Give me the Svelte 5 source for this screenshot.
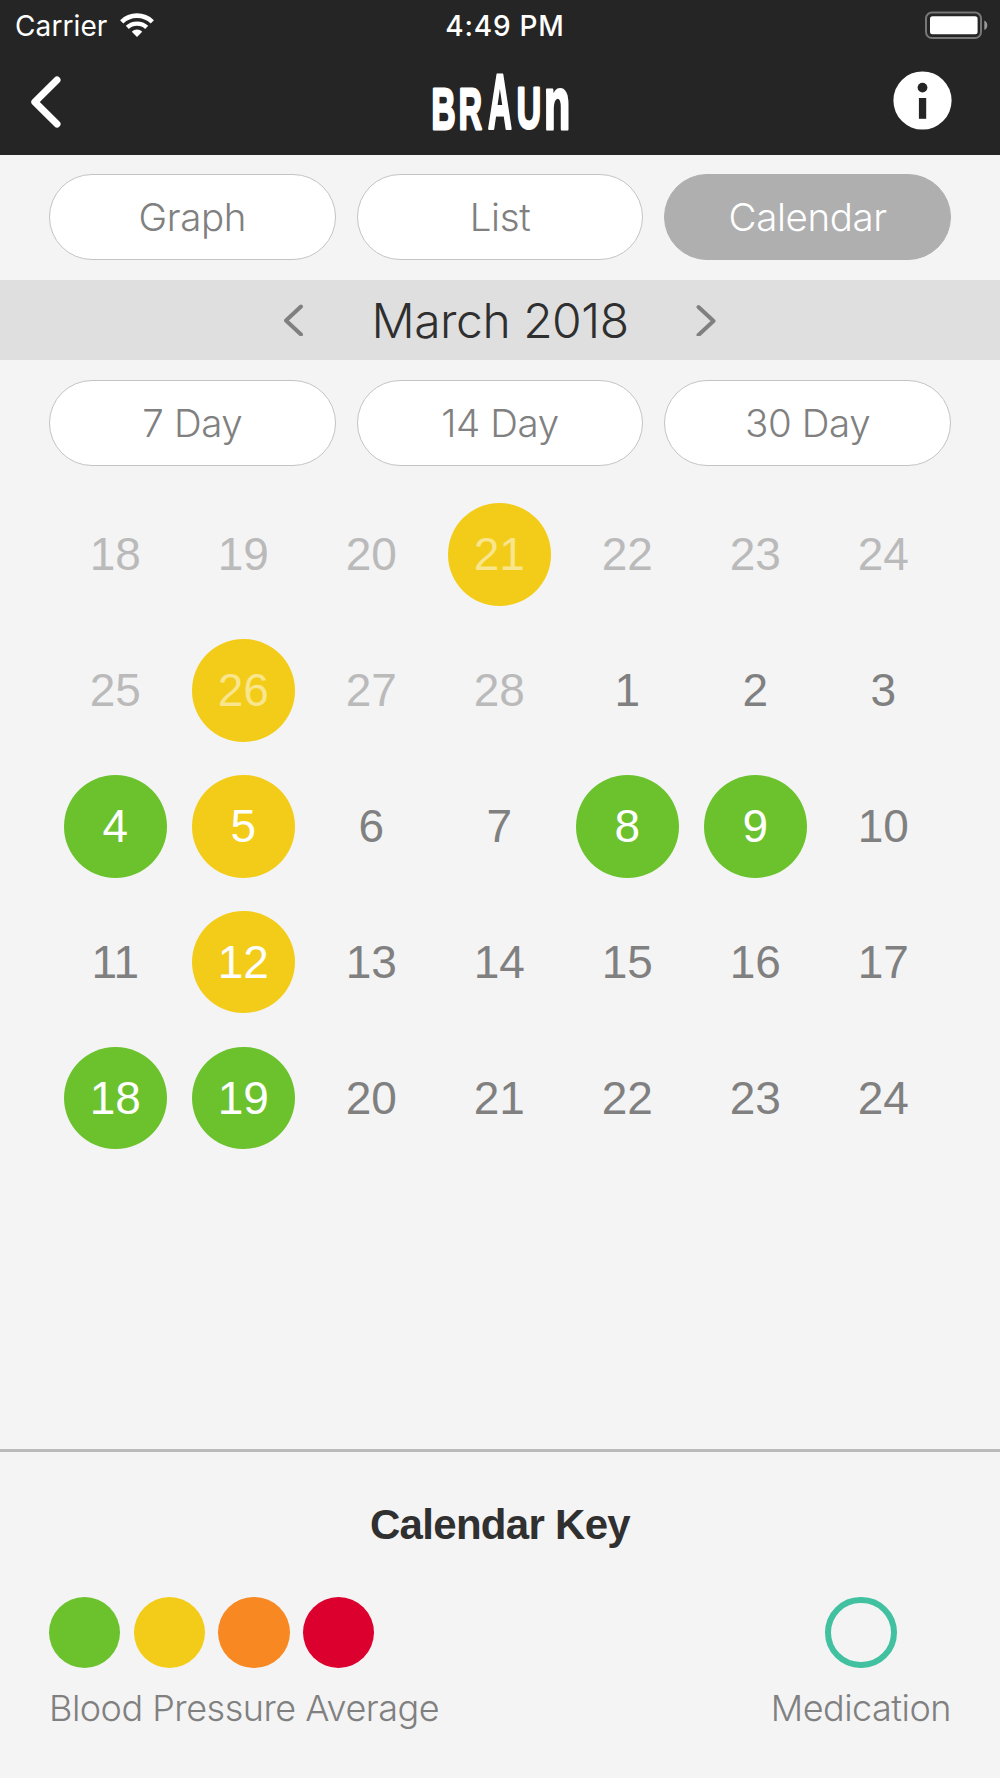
<script lang="ts">
  type Level = 'normal' | 'elevated' | 'high' | 'severe';

  interface Day {
    date: number;
    outside?: boolean;
    level?: Level;
  }

  const views = ['Graph', 'List', 'Calendar'];
  const ranges = ['7 Day', '14 Day', '30 Day'];
  const levels: Level[] = ['normal', 'elevated', 'high', 'severe'];

  const previous: Record<number, Level> = { 21: 'elevated', 26: 'elevated' };
  const current: Record<number, Level> = {
    4: 'normal',
    5: 'elevated',
    8: 'normal',
    9: 'normal',
    12: 'elevated',
    18: 'normal',
    19: 'normal'
  };

  let view = $state('Calendar');

  const days: Day[] = [];
  for (let date = 18; date <= 28; date++) {
    days.push({ date, outside: true, level: previous[date] });
  }
  for (let date = 1; date <= 24; date++) {
    days.push({ date, level: current[date] });
  }
</script>

<div class="screen">
  <header class="header">
    <div class="status">
      <div class="status__carrier">
        <span>Carrier</span>
        <svg width="34" height="26" viewBox="0 0 34 26" fill="none" stroke="#fff" aria-hidden="true">
          <path d="M1.7 8.8C10.2 .6 23.8 .6 32.3 8.8" stroke-width="4.6" />
          <path d="M7.3 14.4C12.7 9.3 21.3 9.3 26.7 14.4" stroke-width="4.4" />
          <path d="M11.8 18.7C14.7 15.9 19.3 15.9 22.2 18.7L17 24.1Z" fill="#fff" stroke="none" />
        </svg>
      </div>
      <span class="status__time">4:49 PM</span>
      <svg class="status__battery" width="65" height="30" viewBox="0 0 65 30" aria-hidden="true">
        <rect x="2" y="1.5" width="55" height="25.6" rx="6" fill="none" stroke="#777" stroke-width="2" />
        <rect x="6" y="5.3" width="47.6" height="18" rx="2.5" fill="#fff" />
        <path d="M60.3 9.5C64.3 11 64.3 17.6 60.3 19.1Z" fill="#999" />
      </svg>
    </div>
    <nav class="nav">
      <button class="icon-button" aria-label="Back">
        <svg width="34" height="58" viewBox="0 0 34 58" fill="none">
          <path
            d="M27 8L4.8 30L27 52"
            stroke="#fff"
            stroke-width="7"
            stroke-linecap="round"
            stroke-linejoin="round"
          />
        </svg>
      </button>
      <svg class="logo" width="140" height="100" viewBox="0 -20 140 100">
        <text transform="translate(1.6 57.7) scale(.573 1)" font-size="58">B</text>
        <text transform="translate(28.7 57.7) scale(.553 1)" font-size="58">R</text>
        <text transform="translate(58 57.7) scale(.42 1)" font-size="78.5">A</text>
        <text transform="translate(86.8 57.3) scale(.58 1)" font-size="58">U</text>
        <text transform="translate(113.9 57.7) scale(.58 1)" font-size="74">n</text>
      </svg>
      <button class="icon-button" aria-label="Information">
        <svg width="60" height="60" viewBox="0 0 60 60">
          <circle cx="29.5" cy="29.5" r="29.1" fill="#fff" />
          <circle cx="29.5" cy="16.6" r="4.9" fill="#252525" />
          <rect x="25.9" y="27" width="7.3" height="20.8" fill="#252525" />
        </svg>
      </button>
    </nav>
  </header>

  <div class="tabs">
    {#each views as name}
      <button class="pill" class:pill--active={view === name} onclick={() => (view = name)}>
        {name}
      </button>
    {/each}
  </div>

  <div class="month">
    <button class="icon-button" aria-label="Previous month">
      <svg width="20" height="32" viewBox="0 0 20 32" fill="none">
        <path d="M17 2.5L2 16.5L17 30.5" />
      </svg>
    </button>
    <h1 class="month__name">March 2018</h1>
    <button class="icon-button" aria-label="Next month">
      <svg width="20" height="32" viewBox="0 0 20 32" fill="none">
        <path d="M2.5 3L17.5 17L2.5 31" />
      </svg>
    </button>
  </div>

  <div class="tabs">
    {#each ranges as range}
      <button class="pill">{range}</button>
    {/each}
  </div>

  <main class="calendar">
    {#each days as day}
      <div class="calendar__cell">
        <span class="day {day.level ?? ''}" class:day--marked={day.level} class:day--outside={day.outside}>
          {day.date}
        </span>
      </div>
    {/each}
  </main>

  <footer class="key">
    <h2 class="key__title">Calendar Key</h2>
    <div class="key__row">
      <div class="key__item">
        <div class="key__dots">
          {#each levels as level}
            <span class="dot {level}"></span>
          {/each}
        </div>
        <span class="key__label">Blood Pressure Average</span>
      </div>
      <div class="key__item key__item--center">
        <span class="dot dot--ring"></span>
        <span class="key__label">Medication</span>
      </div>
    </div>
  </footer>
</div>

<style>
  :global(body) {
    margin: 0;
  }

  .screen {
    display: flex;
    flex-direction: column;
    width: 1000px;
    height: 1778px;
    overflow: hidden;
    background: #f4f4f4;
    font-family: Inter, 'Liberation Sans', sans-serif;
    color: #808080;
  }

  button {
    padding: 0;
    border: 0;
    background: none;
    font: inherit;
    color: inherit;
    cursor: pointer;
  }

  svg {
    display: block;
  }

  .header {
    height: 154.5px;
    flex: none;
    background: #252525;
    color: #fff;
  }

  .status {
    display: grid;
    grid-template-columns: 1fr auto 1fr;
    align-items: center;
    height: 51px;
    padding: 0 11px 0 15px;
    font-size: 28px;
  }

  .status__carrier {
    display: flex;
    align-items: center;
    gap: 13px;
    letter-spacing: 0.1px;
  }

  .status__time {
    padding-left: 6px;
    font-weight: 500;
    letter-spacing: 0.8px;
  }

  .status__battery {
    justify-self: end;
  }

  .nav {
    display: grid;
    grid-template-columns: 1fr auto 1fr;
    align-items: center;
    height: 100px;
    padding: 0 47px 0 30px;
  }

  .nav .icon-button:last-child {
    justify-self: end;
  }

  .logo {
    margin-left: 17px;
    overflow: visible;
    font-family: 'Liberation Sans', sans-serif;
    font-weight: 700;
    fill: #fff;
    stroke: #fff;
    stroke-width: 3px;
    stroke-linejoin: round;
  }

  .tabs {
    display: grid;
    grid-template-columns: repeat(3, 1fr);
    gap: 21px;
    padding: 19.5px 49px 20px;
  }

  .pill {
    height: 86px;
    border: 1px solid #c4c4c4;
    border-radius: 43px;
    background: #fff;
    font-size: 38.5px;
    font-weight: 300;
    letter-spacing: -0.4px;
  }

  .pill--active {
    border-color: #afafaf;
    background: #afafaf;
    color: #fff;
  }

  .month {
    display: flex;
    align-items: center;
    justify-content: center;
    height: 80px;
    background: #dfdfdf;
  }

  .month path {
    stroke: #808080;
    stroke-width: 4px;
    stroke-linecap: round;
    stroke-linejoin: round;
  }

  .month__name {
    width: 392px;
    margin: 0;
    text-align: center;
    font-size: 48px;
    font-weight: 300;
    letter-spacing: -0.5px;
    color: #2f2f2f;
  }

  .calendar {
    display: grid;
    grid-template-columns: repeat(7, 128px);
    grid-auto-rows: 135.9px;
    justify-content: center;
    align-content: start;
    flex: 1;
    padding: 1px 1.4px 0 0;
  }

  .calendar__cell {
    display: grid;
    place-items: center;
  }

  .day {
    display: grid;
    place-items: center;
    width: 102.6px;
    height: 102.6px;
    border-radius: 50%;
    font-family: 'Liberation Sans', sans-serif;
    font-size: 46px;
    color: #808080;
  }

  .day--outside {
    color: #bababa;
  }

  .day--marked {
    color: #fff;
  }

  .day--marked.day--outside {
    color: #f9e58b;
  }

  .normal {
    background: #6bc22d;
  }

  .elevated {
    background: #f2cc18;
  }

  .high {
    background: #f88822;
  }

  .severe {
    background: #dc002e;
  }

  .key {
    height: 326px;
    border-top: 3px solid #bababa;
  }

  .key__title {
    margin: 48px 0 0;
    text-align: center;
    font-family: 'Liberation Sans', sans-serif;
    font-size: 42px;
    line-height: 50px;
    font-weight: 700;
    letter-spacing: -0.7px;
    color: #303030;
  }

  .key__row {
    display: flex;
    justify-content: space-between;
    margin-top: 46.5px;
    padding: 0 49px;
  }

  .key__item {
    display: flex;
    flex-direction: column;
    gap: 16.5px;
  }

  .key__item--center {
    align-items: center;
  }

  .key__dots {
    display: flex;
    gap: 13.2px;
  }

  .dot {
    width: 71.4px;
    height: 71.4px;
    border-radius: 50%;
    box-sizing: border-box;
  }

  .dot--ring {
    border: 6px solid #41c1a0;
  }

  .key__label {
    font-size: 36px;
    line-height: 48px;
    font-weight: 300;
    letter-spacing: -0.5px;
    white-space: nowrap;
  }
</style>
